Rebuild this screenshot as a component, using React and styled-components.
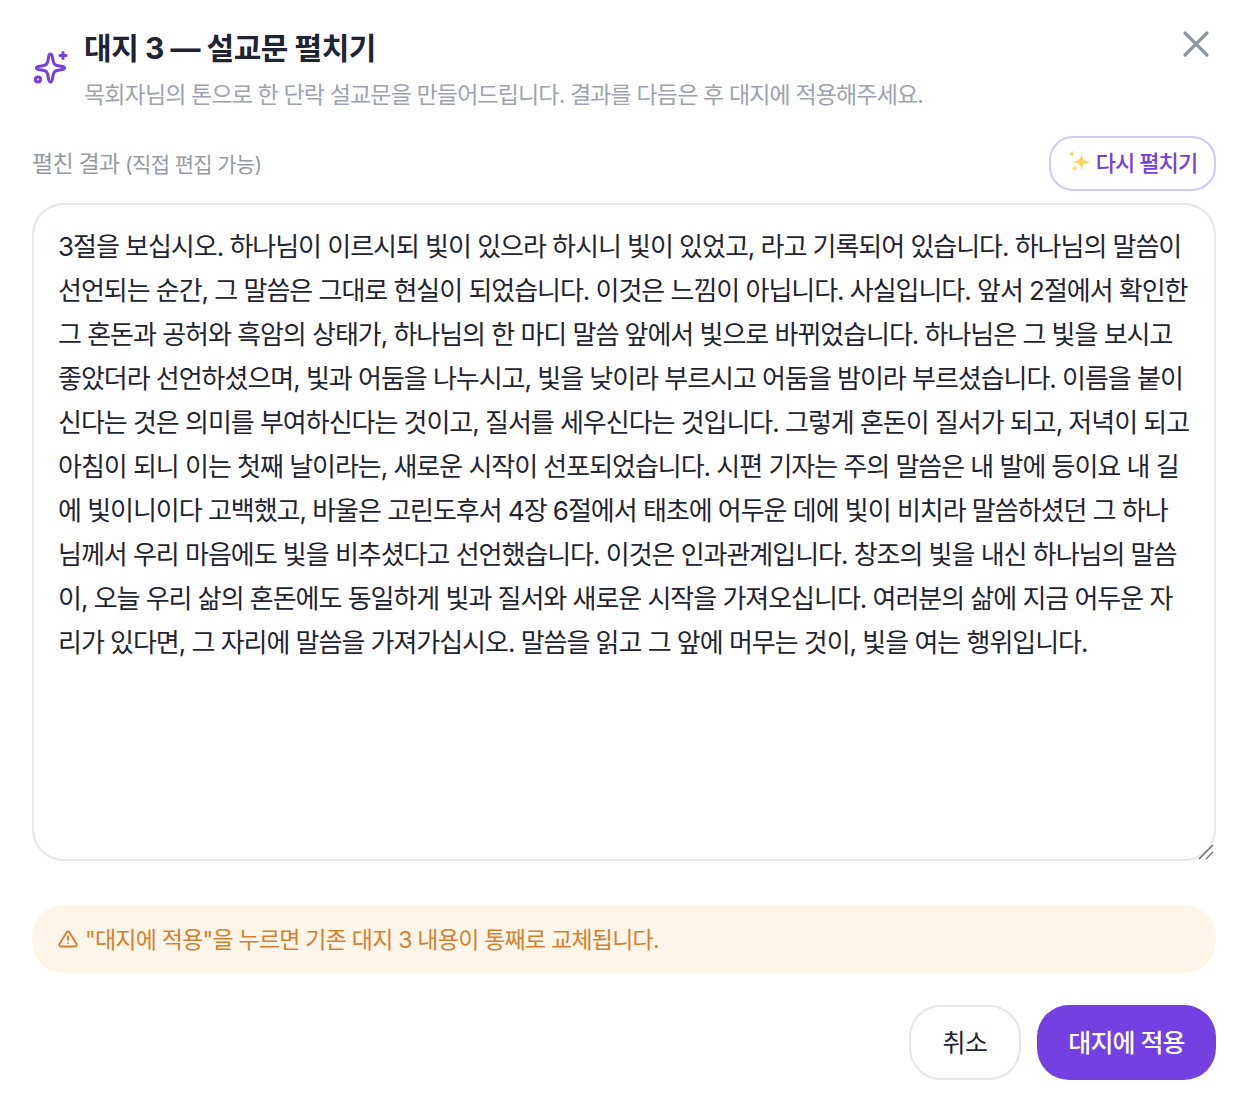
import React from "react";
import styled, { createGlobalStyle } from "styled-components";

const Global = createGlobalStyle`
  html, body { margin: 0; background: #fff; }
  * { box-sizing: border-box; }
  body { font-family: "Inter", "Noto Sans CJK KR", sans-serif; }
`;
const Dialog = styled.div`
  width: 1248px; height: 1112px; padding: 24px 32px 32px; display: flex; flex-direction: column;
`;
const Header = styled.header`display: flex; justify-content: space-between; align-items: flex-start; height: 112px;`;
const HeadLeft = styled.div`display: flex; align-items: flex-start; gap: 16px;`;
const TitleBlock = styled.div`display: flex; flex-direction: column; gap: 9px;`;
const Title = styled.h1`margin: 0; font-size: 30px; line-height: 48px; font-weight: 700; color: #1f2430; letter-spacing: -0.47px;`;
const Sub = styled.p`margin: 0; font-size: 23px; line-height: 28px; color: #9ca3af; letter-spacing: -0.86px;`;
const CloseBtn = styled.button`border: 0; background: none; padding: 0; width: 28px; height: 28px; margin: 6px 6px 0 0; color: #8f96a1; display: flex;`;
const LabelRow = styled.div`display: flex; justify-content: space-between; align-items: center; height: 56px; margin-bottom: 11px;`;
const Label = styled.label`font-size: 23px; color: #949ba6; letter-spacing: -0.75px; padding-bottom: 5px; small { font-size: 21px; letter-spacing: -0.65px; }`;
const Redo = styled.button`height: 55px; width: 167px; border: 2px solid #d3c6f8; border-radius: 24px; background: #fff; color: #7540e2; font: inherit; font-size: 22px; font-weight: 500; letter-spacing: -0.95px; display: flex; align-items: center; justify-content: center; gap: 5px; padding: 0 0 4px; margin-bottom: 2px;`;
const EditorWrap = styled.div`position: relative; height: 658px;`;
const Editor = styled.textarea`
  width: 1184px; height: 658px; border: 2px solid #e7e7ec; border-radius: 32px; padding: 20px 24px; margin: 0; outline: none;
  font-family: inherit; font-size: 26px; line-height: 44px; color: #1f2430; letter-spacing: -1.03px; display: block; resize: none; background: #fff;
`;
const Grip = styled.svg`position: absolute; right: 1px; bottom: 1px; pointer-events: none;`;
const Notice = styled.div`margin-top: 44px; height: 68px; border-radius: 32px; background: #fef5e9; color: #d4802f; font-size: 23px; letter-spacing: -0.78px; display: flex; align-items: center; gap: 7px; padding: 0 25px 0 26px; span { padding-bottom: 2px; }`;
const Footer = styled.footer`margin-top: 32px; display: flex; justify-content: flex-end; gap: 16px;`;
const Cancel = styled.button`width: 112px; height: 75px; border: 2px solid #e7e7ec; border-radius: 32px; background: #fff; color: #1f2430; font: inherit; font-size: 25px; font-weight: 400; letter-spacing: -0.5px; padding: 0 0 4px;`;
const Apply = styled.button`width: 179px; height: 75px; border: 0; border-radius: 32px; background: #7540e2; color: #fff; font: inherit; font-size: 25px; font-weight: 500; letter-spacing: -0.9px; padding: 0 0 4px;`;
const SparkBox = styled.svg`margin-top: 26px; flex-shrink: 0;`;

const TEXT = "3절을 보십시오. 하나님이 이르시되 빛이 있으라 하시니 빛이 있었고, 라고 기록되어 있습니다. 하나님의 말씀이 선언되는 순간, 그 말씀은 그대로 현실이 되었습니다. 이것은 느낌이 아닙니다. 사실입니다. 앞서 2절에서 확인한 그 혼돈과 공허와 흑암의 상태가, 하나님의 한 마디 말씀 앞에서 빛으로 바뀌었습니다. 하나님은 그 빛을 보시고 좋았더라 선언하셨으며, 빛과 어둠을 나누시고, 빛을 낮이라 부르시고 어둠을 밤이라 부르셨습니다. 이름을 붙이신다는 것은 의미를 부여하신다는 것이고, 질서를 세우신다는 것입니다. 그렇게 혼돈이 질서가 되고, 저녁이 되고 아침이 되니 이는 첫째 날이라는, 새로운 시작이 선포되었습니다. 시편 기자는 주의 말씀은 내 발에 등이요 내 길에 빛이니이다 고백했고, 바울은 고린도후서 4장 6절에서 태초에 어두운 데에 빛이 비치라 말씀하셨던 그 하나님께서 우리 마음에도 빛을 비추셨다고 선언했습니다. 이것은 인과관계입니다. 창조의 빛을 내신 하나님의 말씀이, 오늘 우리 삶의 혼돈에도 동일하게 빛과 질서와 새로운 시작을 가져오십니다. 여러분의 삶에 지금 어두운 자리가 있다면, 그 자리에 말씀을 가져가십시오. 말씀을 읽고 그 앞에 머무는 것이, 빛을 여는 행위입니다.";

const Spark = () => (
  <SparkBox width="36" height="36" viewBox="0 0 36 36" fill="none" stroke="#7540e2" strokeWidth="3" strokeLinecap="round" strokeLinejoin="round">
    <path d="M18.500 4C19.800 4 20 5 20.300 6.500L21.300 11.500Q22 15 25 15.500L30.500 16.500C32 16.800 32.500 17 32.500 18C32.500 19 32 19.200 30.500 19.500L25 20.500Q22 21 21.300 24.500L20.300 29.500C20 31 19.800 32 18.500 32C17.200 32 17 31 16.700 29.500L15.700 24.500Q15 21 12 20.500L6.500 19.500C5 19.200 4.500 19 4.500 18C4.500 17 5 16.800 6.500 16.500L12 15.500Q15 15 15.700 11.500L16.700 6.500C17 5 17.200 4 18.500 4z" />
    <path d="M31 2.500v6M34 5.500h-6" />
    <circle cx="6" cy="29.500" r="2.600" />
  </SparkBox>
);
const Emoji = () => (
  <svg width="23" height="24" viewBox="0 0 23 24" fill="#fbd35a">
    <path d="M13.500 5c1 5.500 2.500 7 9 8-6.500 1-8 2.500-9 8-1-5.500-2.500-7-9-8 6.500-1 8-2.500 9-8z" />
    <path d="M4 1c.4 2.500 1 3 3 3.700-2 .6-2.600 1.200-3 3.800-.4-2.600-1-3.200-3-3.800 2-.7 2.600-1.200 3-3.700z" />
    <path d="M6.500 16c.3 2.300.8 2.800 2.500 3.500-1.700.6-2.200 1.200-2.500 3.500-.3-2.300-.8-2.900-2.500-3.500 1.700-.7 2.200-1.200 2.500-3.500z" />
  </svg>
);
const Warn = () => (
  <svg width="20" height="20" viewBox="0 0 24 24" fill="none" stroke="#d4802f" strokeWidth="2.200" strokeLinecap="round" strokeLinejoin="round">
    <path d="M10.300 3.900 1.800 18a2 2 0 0 0 1.700 3h17a2 2 0 0 0 1.700-3L13.700 3.900a2 2 0 0 0-3.400 0z" />
    <path d="M12 9v4M12 17h.01" />
  </svg>
);
const X = () => (
  <svg width="28" height="28" viewBox="0 0 28 28" fill="none" stroke="currentColor" strokeWidth="3.200" strokeLinecap="round">
    <path d="M3 3 25 25M25 3 3 25" />
  </svg>
);

export default function App() {
  return (
    <Dialog>
      <Global />
      <Header>
        <HeadLeft>
          <Spark />
          <TitleBlock>
            <Title>대지 3 — 설교문 펼치기</Title>
            <Sub>목회자님의 톤으로 한 단락 설교문을 만들어드립니다. 결과를 다듬은 후 대지에 적용해주세요.</Sub>
          </TitleBlock>
        </HeadLeft>
        <CloseBtn aria-label="닫기"><X /></CloseBtn>
      </Header>
      <LabelRow>
        <Label>펼친 결과 <small>(직접 편집 가능)</small></Label>
        <Redo><Emoji />다시 펼치기</Redo>
      </LabelRow>
      <EditorWrap>
        <Editor defaultValue={TEXT} spellCheck={false} />
        <Grip width="18" height="18" viewBox="0 0 18 18" fill="none" strokeWidth="1.300">
          <path d="M2 17 16 3" stroke="#5f5f5f" />
          <path d="M9 17 16 10" stroke="#6f6f6f" />
        </Grip>
      </EditorWrap>
      <Notice><Warn /><span>"대지에 적용"을 누르면 기존 대지 3 내용이 통째로 교체됩니다.</span></Notice>
      <Footer>
        <Cancel>취소</Cancel>
        <Apply>대지에 적용</Apply>
      </Footer>
    </Dialog>
  );
}
